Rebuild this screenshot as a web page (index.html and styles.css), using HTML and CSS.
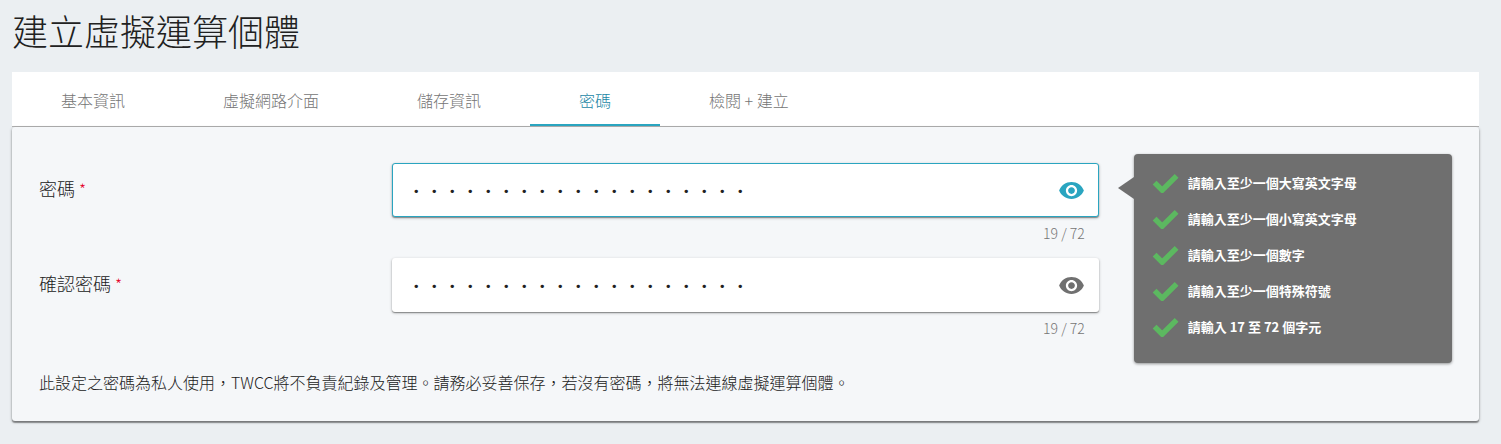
FILE: index.html
```html
<!DOCTYPE html>
<html lang="zh-Hant">
<head>
<meta charset="utf-8">
<meta name="viewport" content="width=device-width, initial-scale=1">
<title>建立虛擬運算個體</title>
<link rel="stylesheet" href="styles.css">
</head>
<body>
<svg class="sprite" aria-hidden="true">
  <symbol id="eye" viewBox="0 0 24 24"><path d="M12 4.5C7 4.5 2.73 7.61 1 12c1.73 4.39 6 7.5 11 7.5s9.27-3.11 11-7.5c-1.73-4.39-6-7.5-11-7.5zM12 17c-2.76 0-5-2.24-5-5s2.240-5 5-5 5 2.240 5 5-2.240 5-5 5zm0-8c-1.660 0-3 1.340-3 3s1.340 3 3 3 3-1.340 3-3-1.340-3-3-3z"/></symbol>
  <symbol id="check" viewBox="0 0 27 20"><path d="M2.600 9.600 10.200 17.200 24.600 2.800" fill="none" stroke="currentColor" stroke-width="5.400" stroke-linejoin="miter"/></symbol>
</svg>
<main class="page">
  <h1 class="title">建立虛擬運算個體</h1>
  <nav class="tabs">
    <a class="tab" href="#basic">基本資訊</a>
    <a class="tab" href="#network">虛擬網路介面</a>
    <a class="tab" href="#storage">儲存資訊</a>
    <a class="tab tab-active" href="#password" aria-current="step">密碼</a>
    <a class="tab" href="#review">檢閱 + 建立</a>
  </nav>
  <section class="card">
    <div class="layout">
      <form class="form">
        <div class="row">
          <label class="label" for="pw">密碼 <span class="required">*</span></label>
          <div class="field">
            <div class="box box-focus">
              <input class="input" id="pw" type="password" value="Abcdefgh12345678!@#" autocomplete="new-password">
              <button class="toggle" type="button" aria-label="顯示密碼"><svg class="eye"><use href="#eye"/></svg></button>
            </div>
            <div class="counter">19 / 72</div>
          </div>
        </div>
        <div class="row">
          <label class="label" for="pw2">確認密碼 <span class="required">*</span></label>
          <div class="field">
            <div class="box">
              <input class="input" id="pw2" type="password" value="Abcdefgh12345678!@#" autocomplete="new-password">
              <button class="toggle" type="button" aria-label="顯示確認密碼"><svg class="eye"><use href="#eye"/></svg></button>
            </div>
            <div class="counter">19 / 72</div>
          </div>
        </div>
      </form>
      <ul class="rules">
        <li class="rule"><svg class="check"><use href="#check"/></svg>請輸入至少一個大寫英文字母</li>
        <li class="rule"><svg class="check"><use href="#check"/></svg>請輸入至少一個小寫英文字母</li>
        <li class="rule"><svg class="check"><use href="#check"/></svg>請輸入至少一個數字</li>
        <li class="rule"><svg class="check"><use href="#check"/></svg>請輸入至少一個特殊符號</li>
        <li class="rule"><svg class="check"><use href="#check"/></svg>請輸入 17 至 72 個字元</li>
      </ul>
    </div>
    <p class="note">此設定之密碼為私人使用，TWCC將不負責紀錄及管理。請務必妥善保存，若沒有密碼，將無法連線虛擬運算個體。</p>
  </section>
</main>
</body>
</html>
```
FILE: styles.css
```css
* { box-sizing: border-box; }

body {
  margin: 0;
  background: #ebeff2;
  color: #212121;
  font-family: "Noto Sans CJK TC", sans-serif;
  font-size: 16px;
  font-weight: 300;
  line-height: 24px;
}

.sprite { display: none; }

.page { padding: 4px 22px 21px 12px; }

.title {
  margin: 0 0 16px;
  font-size: 36px;
  font-weight: 300;
  line-height: 52px;
}

.tabs {
  display: flex;
  background: #fff;
  border-bottom: 1px solid #b3b3b3;
}

.tab {
  padding: 16px 49px 12px;
  border-bottom: 2px solid transparent;
  color: #757575;
  text-decoration: none;
}

.tab-active {
  border-bottom-color: #2aa5c0;
  color: #1c87a5;
}

.card {
  padding: 27px;
  background: #f5f7f9;
  border-radius: 3px;
  box-shadow: 0 1px 3px rgba(0, 0, 0, .4), 0 2px 1px rgba(0, 0, 0, .3);
}

.layout {
  display: grid;
  grid-template-columns: 3fr 1fr;
  align-items: start;
}

.form {
  display: grid;
  gap: 15px;
  padding-top: 9px;
}

.row {
  display: grid;
  grid-template-columns: 1fr 2fr;
}

.label {
  font-size: 18px;
  line-height: 50px;
}

.required { color: #e4002b; font-size: 16px; }

.box {
  display: flex;
  align-items: center;
  height: 54px;
  padding: 0 13px 0 14px;
  background: #fff;
  border: 1px solid transparent;
  border-radius: 3px;
  box-shadow: 0 1px 3px rgba(0, 0, 0, .3), 0 1px 1px rgba(0, 0, 0, .3);
}

.box-focus { border-color: #2aa5c0; }

.input {
  flex: 1;
  min-width: 0;
  padding: 0;
  border: 0;
  outline: 0;
  background: transparent;
  color: #212121;
  font: inherit;
  font-size: 18px;
}

.toggle {
  display: flex;
  padding: 0;
  border: 0;
  background: none;
  color: #707070;
}

.box-focus .toggle { color: #2aa5c0; }

.eye { width: 27px; height: 27px; fill: currentColor; }

.counter {
  margin-top: 6px;
  padding-right: 14px;
  color: #757575;
  font-size: 14px;
  line-height: 20px;
  text-align: right;
}

.rules {
  position: relative;
  margin: 0 0 0 35px;
  padding: 11px 18px 18px;
  background: #6f6f6f;
  border-radius: 4px;
  box-shadow: 0 1px 3px rgba(0, 0, 0, .4);
  color: #fff;
  font-size: 13px;
  font-weight: 700;
  line-height: 36px;
  list-style: none;
}

.rules::before {
  content: "";
  position: absolute;
  top: 23px;
  right: 100%;
  border: solid transparent;
  border-width: 11px 16px 11px 0;
  border-right-color: #6f6f6f;
}

.rule {
  display: flex;
  align-items: center;
  gap: 9px;
}

.check { flex: none; width: 27px; height: 20px; color: #5cb860; }

.note { margin: 7px 0 0; }
```
